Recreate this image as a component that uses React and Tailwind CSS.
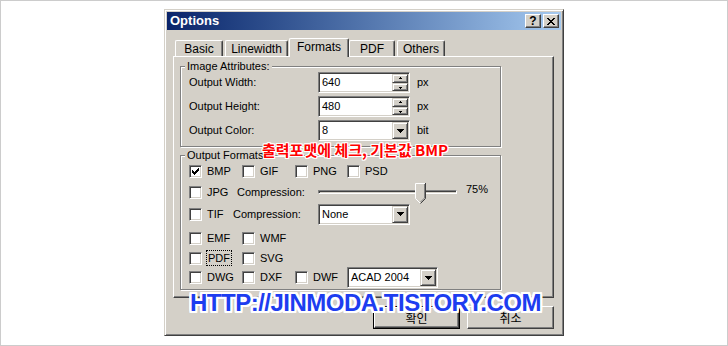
import React from 'react';

// classic win2k bevels
const raised =
  'border border-t-white border-l-white border-r-[#404040] border-b-[#404040] shadow-[inset_-1px_-1px_0_#808080]';
const raisedBtn =
  'border border-t-[#d4d0c8] border-l-[#d4d0c8] border-r-[#404040] border-b-[#404040] shadow-[inset_1px_1px_0_#fff,inset_-1px_-1px_0_#808080]';
const sunken =
  'border border-t-[#808080] border-l-[#808080] border-r-white border-b-white shadow-[inset_1px_1px_0_#404040,inset_-1px_-1px_0_#d4d0c8]';

const CheckMark = () => (
  <svg width="7" height="7" viewBox="0 0 7 7" shapeRendering="crispEdges">
    <path
      d="M0 2h1v3h-1z M1 3h1v3h-1z M2 4h1v3h-1z M3 3h1v3h-1z M4 2h1v3h-1z M5 1h1v3h-1z M6 0h1v3h-1z"
      fill="#000"
    />
  </svg>
);

const DownArrow = () => (
  <svg width="7" height="4" viewBox="0 0 7 4" shapeRendering="crispEdges">
    <path d="M0 0h7v1h-7z M1 1h5v1h-5z M2 2h3v1h-3z M3 3h1v1h-1z" fill="#000" />
  </svg>
);

const SpinArrow = ({ up }) => (
  <svg width="5" height="3" viewBox="0 0 5 3" shapeRendering="crispEdges">
    {up ? (
      <path d="M2 0h1v1h-1z M1 1h3v1h-3z" fill="#000" />
    ) : (
      <path d="M1 1h3v1h-3z M2 2h1v1h-1z" fill="#000" />
    )}
  </svg>
);

const Check = ({ checked }) => (
  <span className={`w-[13px] h-[13px] bg-white shrink-0 flex items-center justify-center ${sunken}`}>
    {checked && <CheckMark />}
  </span>
);

const Opt = ({ label, checked, w, focus }) => (
  <div className={`flex items-center shrink-0 ${w}`}>
    <Check checked={checked} />
    {focus ? (
      <span className="ml-[4px] px-[1px] h-[16px] leading-[14px] border border-dotted border-black">{label}</span>
    ) : (
      <span className="ml-[5px]">{label}</span>
    )}
  </div>
);

const SpinField = ({ value }) => (
  <div className={`w-[92px] h-[21px] bg-white flex p-[1px] ${sunken}`}>
    <div className="flex-1 pl-[2px] leading-[17px]">{value}</div>
    <div className="w-[16px] flex flex-col">
      <div className={`h-[9px] bg-[#d4d0c8] flex items-center justify-center ${raisedBtn}`}>
        <SpinArrow up />
      </div>
      <div className={`h-[8px] bg-[#d4d0c8] flex items-center justify-center ${raisedBtn}`}>
        <SpinArrow />
      </div>
    </div>
  </div>
);

const Select = ({ value, w }) => (
  <div className={`h-[21px] bg-white flex p-[1px] shrink-0 ${w} ${sunken}`}>
    <div className="flex-1 pl-[2px] leading-[17px] whitespace-nowrap overflow-hidden">{value}</div>
    <div className={`w-[16px] bg-[#d4d0c8] flex items-center justify-center ${raisedBtn}`}>
      <DownArrow />
    </div>
  </div>
);

const Group = ({ title, className, children }) => (
  <fieldset
    className={`w-[321px] border border-[#808080] shadow-[1px_1px_0_#fff,inset_1px_1px_0_#fff] ${className}`}
  >
    <legend className="ml-[4px] px-[2px] leading-[12px] bg-[#d4d0c8]">{title}</legend>
    {children}
  </fieldset>
);

const AttrRow = ({ label, children, unit }) => (
  <div className="flex items-center h-[21px]">
    <span className="w-[129px]">{label}</span>
    {children}
    <span className="ml-[7px]">{unit}</span>
  </div>
);

const Thumb = () => (
  <svg width="11" height="21" viewBox="0 0 11 21" className="absolute left-[97px] top-[2px]">
    <path d="M0 0H11V15L5.5 20.5L0 15Z" fill="#d4d0c8" />
    <polyline points="0.5,15.5 0.5,0.5 10,0.5" fill="none" stroke="#fff" />
    <polyline points="0.5,15.5 5,20" fill="none" stroke="#fff" />
    <polyline points="10.5,0 10.5,15.5 5.5,20.5" fill="none" stroke="#404040" />
    <polyline points="9.5,1 9.5,15 5.5,19" fill="none" stroke="#808080" />
  </svg>
);

const tabs = [
  { name: 'Basic', w: 'w-[48px]', ml: 'ml-0' },
  { name: 'Linewidth', w: 'w-[63px]', ml: 'ml-[2px]' },
  { name: 'Formats', w: 'w-[60px]', ml: 'ml-[1px]', active: true },
  { name: 'PDF', w: 'w-[46px]', ml: 'ml-0' },
  { name: 'Others', w: 'w-[48px]', ml: 'ml-[2px]' },
];

const outlineWhite1 =
  '[text-shadow:1px_0_0_#fff,-1px_0_0_#fff,0_1px_0_#fff,0_-1px_0_#fff,1px_1px_0_#fff,-1px_-1px_0_#fff,1px_-1px_0_#fff,-1px_1px_0_#fff]';

export default function App() {
  return (
    <div className="relative w-[728px] h-[346px] bg-white border border-[#cccccc] overflow-hidden text-[11px] text-black font-['Liberation_Sans',Arial,sans-serif]">
      <div className="flex justify-center pt-[8px]">
        {/* dialog window */}
        <div className={`w-[400px] h-[327px] bg-[#d4d0c8] p-[2px] ${raisedBtn}`}>
          <div className="h-[18px] flex items-center justify-between pl-[3px] pr-[2px] bg-linear-to-r from-[#0a246a] to-[#a6caf0]">
            <span className="text-white font-bold text-[13px] leading-[18px]">Options</span>
            <div className="flex gap-[2px]">
              <div className={`w-[16px] h-[14px] bg-[#d4d0c8] flex items-center justify-center ${raised}`}>
                <span className="font-bold text-[12px] leading-[12px]">?</span>
              </div>
              <div className={`w-[16px] h-[14px] bg-[#d4d0c8] flex items-center justify-center ${raised}`}>
                <svg width="8" height="7" viewBox="0 0 8 7" shapeRendering="crispEdges">
                  <path
                    d="M0 0h2v1h-2z M6 0h2v1h-2z M1 1h2v1h-2z M5 1h2v1h-2z M2 2h4v1h-4z M3 3h2v1h-2z M2 4h4v1h-4z M1 5h2v1h-2z M5 5h2v1h-2z M0 6h2v1h-2z M6 6h2v1h-2z"
                    fill="#000"
                  />
                </svg>
              </div>
            </div>
          </div>

          <div className="px-[6px] pt-[8px]">
            {/* tabs */}
            <div className="flex items-end h-[18px] pl-[2px]">
              {tabs.map((t) =>
                t.active ? (
                  <div
                    key={t.name}
                    className={`relative z-10 h-[19px] mb-[-1px] bg-[#d4d0c8] flex justify-center pt-[1px] text-[12px] leading-[15px] border-t border-l border-r border-t-white border-l-white border-r-[#404040] shadow-[inset_-1px_0_0_#808080] rounded-t-[2px] ${t.w} ${t.ml}`}
                  >
                    {t.name}
                  </div>
                ) : (
                  <div
                    key={t.name}
                    className={`h-[16px] flex justify-center text-[12px] leading-[16px] border-t border-l border-r border-t-white border-l-white border-r-[#404040] shadow-[inset_-1px_0_0_#808080] rounded-t-[2px] ${t.w} ${t.ml}`}
                  >
                    {t.name}
                  </div>
                )
              )}
            </div>

            {/* tab panel */}
            <div className={`w-[381px] h-[242px] pl-[6px] pt-[3px] ${raised}`}>
              <Group title="Image Attributes:" className="pb-[5px]">
                <div className="pl-[8px] flex flex-col gap-[3px]">
                  <AttrRow label="Output Width:" unit="px">
                    <SpinField value="640" />
                  </AttrRow>
                  <AttrRow label="Output Height:" unit="px">
                    <SpinField value="480" />
                  </AttrRow>
                  <AttrRow label="Output Color:" unit="bit">
                    <Select value="8" w="w-[92px]" />
                  </AttrRow>
                </div>
              </Group>

              <Group title="Output Formats:" className="mt-[2px] pb-[1px]">
                <div className="pl-[8px] flex flex-col">
                  <div className="flex items-center h-[18px] mt-[1px]">
                    <Opt label="BMP" checked w="w-[53px]" />
                    <Opt label="GIF" w="w-[53px]" />
                    <Opt label="PNG" w="w-[52px]" />
                    <Opt label="PSD" w="w-[53px]" />
                  </div>
                  <div className="flex items-center h-[22px] mt-[1px]">
                    <Opt label="JPG" w="w-[48px]" />
                    <span className="w-[81px]">Compression:</span>
                    <div className="relative w-[139px] h-full flex items-center">
                      <div className={`w-full h-[4px] bg-[#d4d0c8] ${sunken}`} />
                      <Thumb />
                    </div>
                    <span className="ml-[9px] mb-[6px]">75%</span>
                  </div>
                  <div className="flex items-center h-[22px]">
                    <Opt label="TIF" w="w-[44px]" />
                    <span className="w-[85px]">Compression:</span>
                    <Select value="None" w="w-[92px]" />
                  </div>
                  <div className="flex items-center h-[18px] mt-[4px]">
                    <Opt label="EMF" w="w-[53px]" />
                    <Opt label="WMF" w="w-[53px]" />
                  </div>
                  <div className="flex items-center h-[18px] mt-[2px]">
                    <Opt label="PDF" w="w-[53px]" focus />
                    <Opt label="SVG" w="w-[53px]" />
                  </div>
                  <div className="flex items-center h-[21px]">
                    <Opt label="DWG" w="w-[53px]" />
                    <Opt label="DXF" w="w-[53px]" />
                    <Opt label="DWF" w="w-[52px]" />
                    <Select value="ACAD 2004" w="w-[91px]" />
                  </div>
                </div>
              </Group>
            </div>

            {/* dialog buttons */}
            <div className="w-[381px] mt-[8px] flex justify-end gap-[7px] text-[12px] font-['Noto_Sans_CJK_KR',sans-serif]">
              <div className="w-[87px] h-[23px] border border-black">
                <div className={`w-full h-full bg-[#d4d0c8] flex items-center justify-center leading-[14px] ${raised}`}>
                  확인
                </div>
              </div>
              <div className={`w-[87px] h-[23px] bg-[#d4d0c8] flex items-center justify-center leading-[14px] ${raised}`}>
                취소
              </div>
            </div>
          </div>
        </div>
      </div>

      {/* blog annotations drawn over the screenshot */}
      <div
        className={`absolute left-[261px] top-[140px] text-[15px] leading-[18px] font-bold text-[#ff0000] whitespace-nowrap font-['Noto_Sans_CJK_KR',sans-serif] ${outlineWhite1}`}
      >
        출력포맷에 체크, 기본값 BMP
      </div>
      <div className="absolute left-[189px] top-[290px] text-[24px] leading-[24px] font-bold tracking-[-0.5px] text-[#1d3df0] whitespace-nowrap [text-shadow:2px_0_0_#fff,-2px_0_0_#fff,0_2px_0_#fff,0_-2px_0_#fff,2px_2px_0_#fff,-2px_-2px_0_#fff,2px_-2px_0_#fff,-2px_2px_0_#fff,1px_2px_0_#fff,2px_1px_0_#fff,-1px_-2px_0_#fff,-2px_-1px_0_#fff,-1px_2px_0_#fff,2px_-1px_0_#fff,1px_-2px_0_#fff,-2px_1px_0_#fff]">
        HTTP://JINMODA.TISTORY.COM
      </div>
    </div>
  );
}
